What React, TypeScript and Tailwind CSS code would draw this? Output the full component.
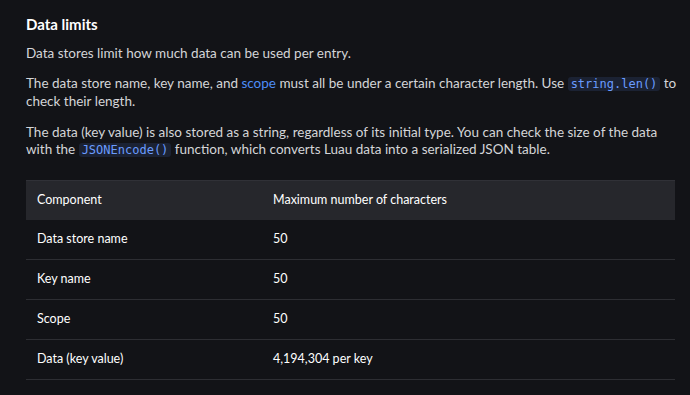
const rows = [
  { name: 'Data store name', max: '50' },
  { name: 'Key name', max: '50' },
  { name: 'Scope', max: '50' },
  { name: 'Data (key value)', max: '4,194,304 per key' },
]

function Code({ children }: { children: React.ReactNode }) {
  return (
    <code className="rounded-[3px] bg-[#1b2233] px-[3px] font-['DejaVu_Sans_Mono',monospace] text-[12px] text-[#6a9cff]">
      {children}
    </code>
  )
}

export default function App() {
  return (
    <div className="min-h-[395px] w-[690px] bg-[#121317] pl-[26px] pr-[6px] pt-[14px] font-['Lato',sans-serif] text-[#d4d5d8]">
      <h3 className="text-[15px] font-bold leading-[20px] text-white">Data limits</h3>

      <p className="mt-[11px] text-[13.5px] leading-[17px]">
        Data stores limit how much data can be used per entry.
      </p>
      <p className="mt-[13px] text-[13.5px] leading-[17px]">
        The data store name, key name, and <span className="text-[#4d8df7]">scope</span> must all be under a certain
        character length. Use <Code>string.len()</Code> to check their length.
      </p>
      <p className="mt-[14px] pr-[18px] text-[13.5px] leading-[17px]">
        The data (key value) is also stored as a string, regardless of its initial type. You can check the size of the
        data with the <Code>JSONEncode()</Code> function, which converts Luau data into a serialized JSON table.
      </p>

      <table className="mt-[21px] w-[649px] border-collapse text-left text-[12.5px] text-white">
        <thead>
          <tr className="h-[39px] border-t border-[#303137] bg-[#26272c]">
            <th className="w-[236px] pl-[11px] font-normal">Component</th>
            <th className="pl-[11px] font-normal">Maximum number of characters</th>
          </tr>
        </thead>
        <tbody>
          {rows.map((r) => (
            <tr key={r.name} className="h-[40px] border-b border-[#2d2e33]">
              <td className="pl-[11px]">{r.name}</td>
              <td className="pl-[11px]">{r.max}</td>
            </tr>
          ))}
        </tbody>
      </table>
    </div>
  )
}
